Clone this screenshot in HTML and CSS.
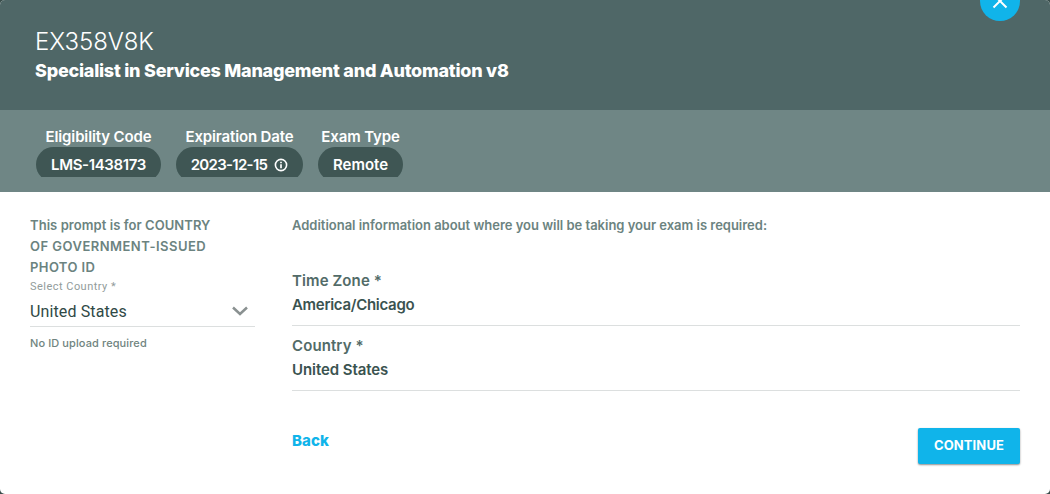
FILE: index.html
```html
<!DOCTYPE html>
<html lang="en">
<head>
<meta charset="utf-8">
<title>EX358V8K</title>
<link rel="stylesheet" href="styles.css">
</head>
<body>
<main class="dialog">
  <header class="hero">
    <h1 class="exam-code">EX358V8K</h1>
    <h2 class="exam-name">Specialist in Services Management and Automation v8</h2>
    <button class="close" aria-label="Close">
      <svg width="16" height="16" viewBox="0 0 16 16"><path d="M1.5 1.5l13 13M14.5 1.5l-13 13" fill="none" stroke="#fff" stroke-width="2"/></svg>
    </button>
  </header>
  <section class="facts">
    <div class="fact fact-code"><span class="fact-label">Eligibility Code</span><div class="clip"><span class="pill"><span>LMS-1438173</span></span></div></div>
    <div class="fact fact-date"><span class="fact-label">Expiration Date</span><div class="clip"><span class="pill"><span>2023-12-15</span>
      <svg class="info" width="14" height="14" viewBox="0 0 14 14"><circle cx="7" cy="7" r="5.6" fill="none" stroke="#fff" stroke-width="1.6"/><path d="M7 6.2v4M7 3.7v1.5" stroke="#fff" stroke-width="1.7"/></svg></span></div></div>
    <div class="fact fact-type"><span class="fact-label">Exam Type</span><div class="clip"><span class="pill"><span>Remote</span></span></div></div>
  </section>
  <section class="content">
    <aside class="identity">
      <p class="prompt"><span class="prompt-lead">This prompt is for COUNTRY</span><br><span class="prompt-type">OF GOVERNMENT-ISSUED</span><br><span class="prompt-id">PHOTO ID</span></p>
      <div class="select-label">Select Country *</div>
      <div class="select"><span>United States</span>
        <svg width="16" height="10" viewBox="0 0 16 10"><path d="M1 1.5l7 6.5 7-6.5" fill="none" stroke="#8a9191" stroke-width="2.5"/></svg>
      </div>
      <div class="hint">No ID upload required</div>
    </aside>
    <div class="details">
      <p class="intro">Additional information about where you will be taking your exam is required:</p>
      <div class="field"><span class="field-label">Time Zone *</span><span class="field-value zone-value">America/Chicago</span></div>
      <div class="field"><span class="field-label">Country *</span><span class="field-value">United States</span></div>
      <div class="actions"><a class="back">Back</a><button class="continue">CONTINUE</button></div>
    </div>
  </section>
</main>
</body>
</html>
```
FILE: styles.css
```css
* { box-sizing: border-box; }
body { margin: 0; background: #394d4b; font-family: Inter, "Liberation Sans", sans-serif; }
h1, h2, p { margin: 0; }
button { border: 0; padding: 0; font: inherit; }
.dialog { width: 1050px; height: 494px; background: #fff; border-radius: 5px; overflow: hidden; position: relative; }
.hero { height: 110px; background: #4f6767; color: #fff; padding: 26px 35px 0; }
.exam-code { font-size: 24px; font-weight: 300; line-height: 32px; letter-spacing: -0.1px; }
.exam-name { font-size: 18px; font-weight: 800; line-height: 26px; letter-spacing: -0.24px; }
.close { position: absolute; top: -19px; left: 980px; width: 40px; height: 40px; border-radius: 50%; background: #10b4ea; display: flex; align-items: center; justify-content: center; }
.facts { height: 82px; background: #6f8685; padding: 17px 36px 0; display: flex; gap: 15px; color: #fff; font-weight: 600; font-size: 15px; }
.fact { display: flex; flex-direction: column; align-items: center; }
.fact-code { width: 125px; }
.fact-date { width: 127px; }
.fact-type { width: 85px; }
.fact-label { line-height: 20px; white-space: nowrap; letter-spacing: -0.14px; }
.clip { width: 100%; height: 30px; overflow: hidden; }
.pill { display: flex; height: 35px; border-radius: 18px; justify-content: center; align-items: center; gap: 7px; background: #3f5654; white-space: nowrap; }
.fact-code .pill { letter-spacing: -0.36px; }
.fact-date .pill { letter-spacing: -0.7px; }
.info { display: block; }
.content { display: grid; grid-template-columns: 225px 728px; gap: 37px; padding: 23px 30px 0; }
.prompt, .intro { font-size: 13px; font-weight: 600; line-height: 21px; color: #6b8380; white-space: nowrap; }
.prompt-lead { letter-spacing: 0.06px; }
.prompt-type { letter-spacing: 0.47px; }
.prompt-id { letter-spacing: 0.4px; }
.intro { letter-spacing: -0.015px; margin-bottom: 33px; }
.select-label { font-size: 11px; line-height: 18px; height: 16px; color: #929c9b; font-family: Roboto, sans-serif; letter-spacing: 0.47px; }
.select { height: 33px; border-bottom: 1px solid #dcdfdf; display: flex; align-items: center; justify-content: space-between; padding: 2px 7px 0 0; font: 400 16px Roboto, sans-serif; letter-spacing: 0.12px; color: #2f4946; }
.hint { margin-top: 6px; font-size: 11px; line-height: 20px; letter-spacing: 0.1px; color: #708480; font-weight: 500; }
.field { height: 65px; border-bottom: 1px solid #dcdfdf; display: flex; flex-direction: column; font-size: 15px; line-height: 24px; font-weight: 600; padding-top: 8px; }
.intro + .field { height: 57px; padding-top: 0; }
.field-label { color: #526b68; letter-spacing: 0.1px; }
.field-value { color: #3a5350; line-height: 23px; letter-spacing: -0.08px; }
.zone-value { letter-spacing: -0.29px; }
.actions { margin-top: 37px; display: flex; justify-content: space-between; align-items: flex-start; }
.back { color: #10b4ea; font-size: 15px; font-weight: 800; line-height: 26px; letter-spacing: 0.1px; }
.continue { width: 102px; height: 36px; padding-bottom: 2px; background: #10b4ea; color: #fff; border-radius: 2px; font-size: 13px; font-weight: 700; letter-spacing: 0.1px; box-shadow: 0 1px 2px rgba(0,0,0,.45); }
```
